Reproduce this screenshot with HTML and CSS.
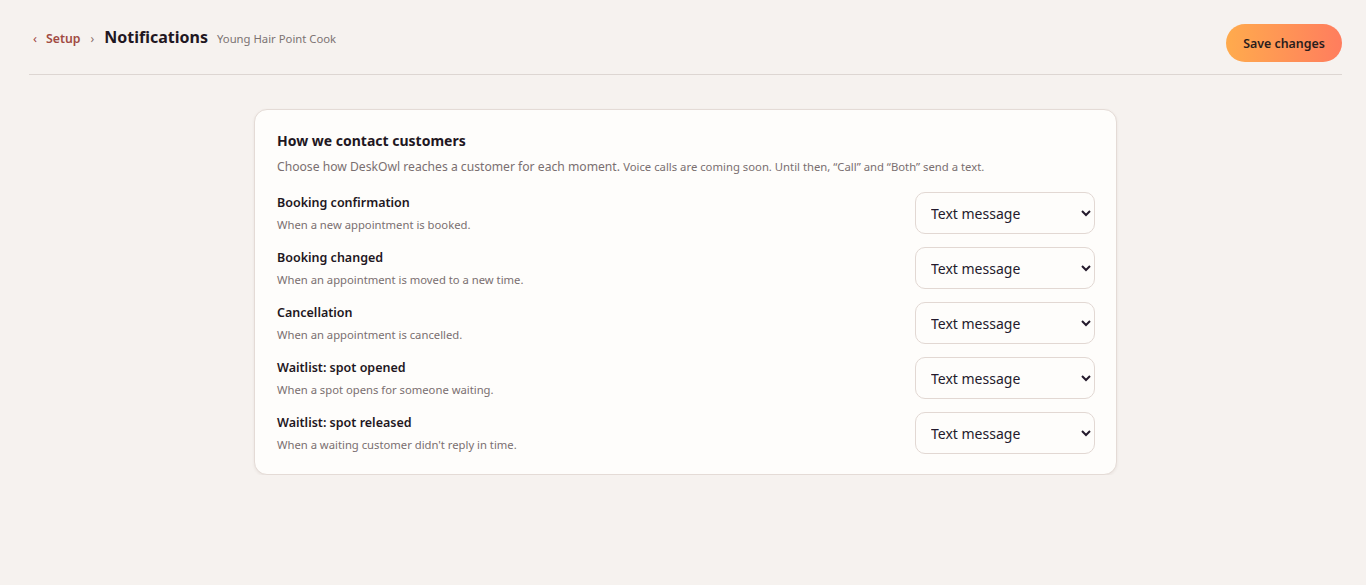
FILE: index.html
```html
<!DOCTYPE html>
<html lang="en">
<head>
<meta charset="utf-8">
<title>Notifications</title>
<link rel="stylesheet" href="styles.css">
</head>
<body>
<div class="page">
  <header class="topbar">
    <div class="crumbs">
      <a class="back" href="#"><span class="chev">‹</span>Setup</a>
      <span class="sep">›</span>
      <h1 class="title">Notifications</h1>
      <span class="biz">Young Hair Point Cook</span>
    </div>
    <button class="save">Save changes</button>
  </header>
  <main class="content">
    <section class="card">
      <h2 class="card-title">How we contact customers</h2>
      <p class="card-desc">Choose how DeskOwl reaches a customer for each moment. <span class="small">Voice calls are coming soon. Until then, “Call” and “Both” send a text.</span></p>
      <div class="rows">
        <div class="row">
          <div class="row-text">
            <div class="row-title">Booking confirmation</div>
            <div class="row-sub">When a new appointment is booked.</div>
          </div>
          <select class="sel"><option>Text message</option><option>Call</option><option>Both</option></select>
        </div>
        <div class="row">
          <div class="row-text">
            <div class="row-title">Booking changed</div>
            <div class="row-sub">When an appointment is moved to a new time.</div>
          </div>
          <select class="sel"><option>Text message</option><option>Call</option><option>Both</option></select>
        </div>
        <div class="row">
          <div class="row-text">
            <div class="row-title">Cancellation</div>
            <div class="row-sub">When an appointment is cancelled.</div>
          </div>
          <select class="sel"><option>Text message</option><option>Call</option><option>Both</option></select>
        </div>
        <div class="row">
          <div class="row-text">
            <div class="row-title">Waitlist: spot opened</div>
            <div class="row-sub">When a spot opens for someone waiting.</div>
          </div>
          <select class="sel"><option>Text message</option><option>Call</option><option>Both</option></select>
        </div>
        <div class="row">
          <div class="row-text">
            <div class="row-title">Waitlist: spot released</div>
            <div class="row-sub">When a waiting customer didn't reply in time.</div>
          </div>
          <select class="sel"><option>Text message</option><option>Call</option><option>Both</option></select>
        </div>
      </div>
    </section>
  </main>
</div>
</body>
</html>
```
FILE: styles.css
```css
* { box-sizing: border-box; }
html, body {
  margin: 0;
  background: #f6f2ef;
  font-family: "Noto Sans", "Open Sans", sans-serif;
  color: #241c24;
}
.page {
  padding: 0 24px 0 29px;
}
.topbar {
  display: flex;
  align-items: flex-start;
  justify-content: space-between;
  height: 75px;
  border-bottom: 1px solid #ddd6d2;
  padding-top: 24px;
}
.crumbs {
  display: flex;
  align-items: baseline;
  line-height: 26px;
}
.back {
  color: #a14a42;
  font-size: 12.3px;
  font-weight: 600;
  text-decoration: none;
  margin-left: 4px;
}
.chev {
  margin-right: 9px;
  font-weight: 400;
  font-size: 13px;
}
.sep {
  color: #8a6e6a;
  font-size: 12px;
  margin: 0 10px 0 10px;
}
.title {
  margin: 0;
  font-size: 16px;
  font-weight: 700;
  color: #1f1722;
}
.biz {
  margin-left: 9px;
  font-size: 11.3px;
  color: #7c7272;
}
.save {
  border: 0;
  border-radius: 19px;
  height: 38px;
  width: 116px;
  background: linear-gradient(90deg, #ffab4d, #ff7d5e);
  color: #2a1d1d;
  font-family: inherit;
  font-size: 12.4px;
  font-weight: 600;
  cursor: pointer;
}
.content {
  display: flex;
  justify-content: center;
  padding-top: 34px;
}
.card {
  width: 863px;
  background: #fefdfb;
  border: 1px solid #e4dbd6;
  border-radius: 13px;
  box-shadow: 0 1px 3px rgba(80, 50, 40, 0.08);
  padding: 21px 21px 20px 22px;
}
.card-title {
  margin: 0;
  font-size: 14px;
  font-weight: 700;
  color: #1f1722;
  line-height: 20px;
}
.card-desc {
  margin: 6px 0 0;
  font-size: 12.15px;
  color: #7a6f70;
  line-height: 20px;
}
.card-desc .small { font-size: 11.3px; }
.rows {
  display: flex;
  flex-direction: column;
  gap: 13px;
  margin-top: 15px;
}
.row {
  display: flex;
  align-items: center;
  justify-content: space-between;
}
.row-title {
  font-size: 12.5px;
  font-weight: 600;
  color: #1f1722;
  line-height: 20px;
}
.row-sub {
  font-size: 11.25px;
  color: #7a6f70;
  line-height: 18px;
  margin-top: 3px;
}
.sel {
  width: 180px;
  height: 42px;
  border: 1px solid #e2d8d3;
  border-radius: 10px;
  background: #fefdfb;
  font-family: inherit;
  font-size: 14px;
  color: #241a2c;
  padding: 0 10px 0 11px;
}
```
